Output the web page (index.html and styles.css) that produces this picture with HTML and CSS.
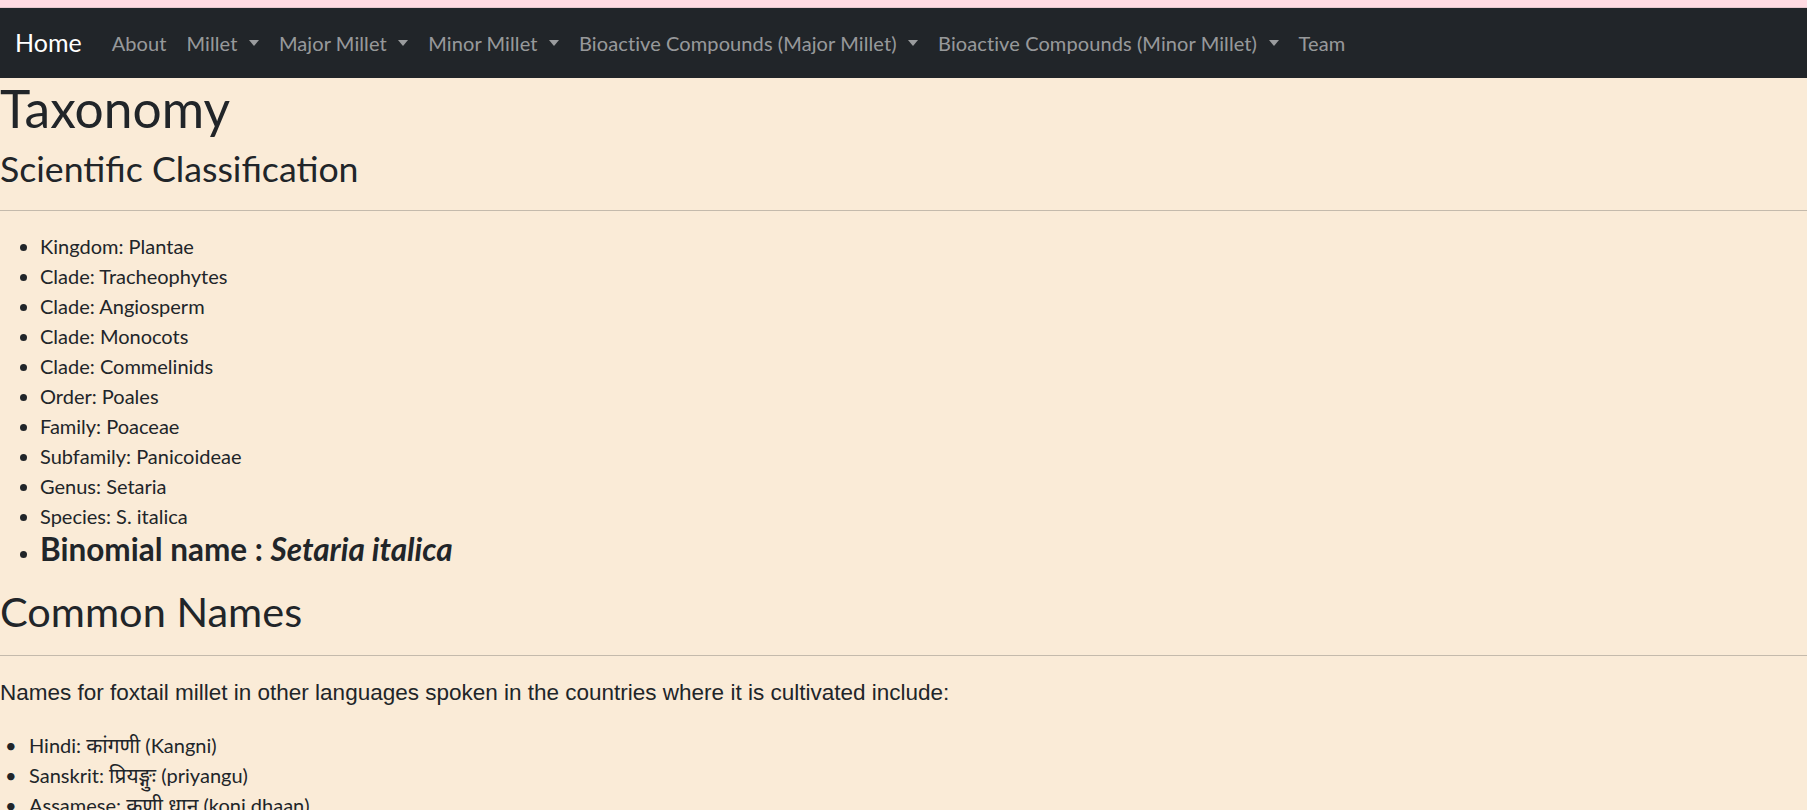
FILE: index.html
```html
<!DOCTYPE html>
<html lang="en">
<head>
<meta charset="utf-8">
<title>Foxtail Millet - Taxonomy</title>
<link rel="stylesheet" href="styles.css">
</head>
<body>
<div class="topstrip"></div>
<nav class="navbar">
  <a class="brand" href="#">Home</a>
  <ul class="nav">
    <li><a class="nav-link" href="#">About</a></li>
    <li><a class="nav-link toggle" href="#">Millet</a></li>
    <li><a class="nav-link toggle" href="#">Major Millet</a></li>
    <li><a class="nav-link toggle" href="#">Minor Millet</a></li>
    <li><a class="nav-link toggle" href="#">Bioactive Compounds (Major Millet)</a></li>
    <li><a class="nav-link toggle" href="#">Bioactive Compounds (Minor Millet)</a></li>
    <li><a class="nav-link" href="#">Team</a></li>
  </ul>
</nav>
<main class="content">
  <h1 class="title">Taxonomy</h1>
  <h3 class="subtitle">Scientific Classification</h3>
  <hr class="rule">
  <ul class="class-list">
    <li>Kingdom: Plantae</li>
    <li>Clade: Tracheophytes</li>
    <li>Clade: Angiosperm</li>
    <li>Clade: Monocots</li>
    <li>Clade: Commelinids</li>
    <li>Order: Poales</li>
    <li>Family: Poaceae</li>
    <li>Subfamily: Panicoideae</li>
    <li>Genus: Setaria</li>
    <li>Species: S. italica</li>
    <li><h4 class="binomial">Binomial name : <i>Setaria italica</i></h4></li>
  </ul>
  <h2 class="section">Common Names</h2>
  <hr class="rule">
  <p class="intro">Names for foxtail millet in other languages spoken in the countries where it is cultivated include:</p>
  <ul class="names-list">
    <li>Hindi: <span class="deva">कांगणी</span> (Kangni)</li>
    <li>Sanskrit: <span class="deva">प्रियङ्गुः</span> (priyangu)</li>
    <li>Assamese: <span class="deva">कणी धान</span> (koni dhaan)</li>
    <li>Bengali: <span class="deva">কাউন</span> (kaon)</li>
    <li>Kannada: <span class="deva">ನವಣೆ</span> (navane)</li>
  </ul>
</main>
</body>
</html>
```
FILE: styles.css
```css
html, body {
  margin: 0;
  padding: 0;
}
body {
  background: #faebd7;
  color: #212529;
  font-family: "Lato", "Noto Sans", "Noto Sans Devanagari", sans-serif;
  font-size: 20px;
  line-height: 1.5;
}
.topstrip {
  height: 7px;
  background: #ffdbe2;
  border-bottom: 1px solid #e6c8ce;
}
.navbar {
  background: #212529;
  height: 70px;
  box-sizing: border-box;
  padding: 10px 15px;
  display: flex;
  align-items: center;
}
.brand {
  color: #fff;
  text-decoration: none;
  font-size: 25px;
  line-height: 37.5px;
  padding: 6px 0;
  margin-right: 20px;
}
.nav {
  list-style: none;
  margin: 0;
  padding: 0;
  display: flex;
}
.nav-link {
  display: block;
  padding: 10px;
  color: rgba(255, 255, 255, 0.55);
  text-decoration: none;
  line-height: 30px;
  letter-spacing: 0.1px;
}
.toggle::after {
  content: "";
  display: inline-block;
  margin-left: 11.5px;
  vertical-align: 0.255em;
  border-top: 6px solid;
  border-left: 5.5px solid transparent;
  border-right: 5.5px solid transparent;
}
.content {
  display: block;
}
.title {
  font-size: 51.5px;
  font-weight: 400;
  line-height: 60px;
  margin: 0 0 10px;
}
.subtitle {
  font-size: 35.7px;
  font-weight: 400;
  line-height: 42px;
  margin: 0 0 10px;
}
.section {
  font-size: 41.5px;
  font-weight: 400;
  line-height: 48px;
  margin: 0 0 10px;
}
.rule {
  margin: 20px 0;
  border: 0;
  border-top: 1px solid #c4baac;
  height: 0;
}
.class-list {
  margin: 0 0 20px;
  padding-left: 40px;
}
.binomial {
  font-size: 31.5px;
  font-weight: 700;
  line-height: 36px;
  margin: 0 0 10px;
}
.intro {
  font-family: "Liberation Sans", Arial, sans-serif;
  font-size: 22.5px;
  line-height: 33.75px;
  margin: 0 0 20px;
}
.names-list {
  margin: 0 0 20px;
  padding-left: 29px;
}
.names-list li {
  line-height: 30px;
}
.names-list li::marker {
  content: "\2022\2002\2009";
}
.deva {
  font-family: "Noto Sans Devanagari", "Lohit Devanagari", "Noto Sans", "Lato", sans-serif;
  line-height: 20px;
  font-size: 21px;
}
```
